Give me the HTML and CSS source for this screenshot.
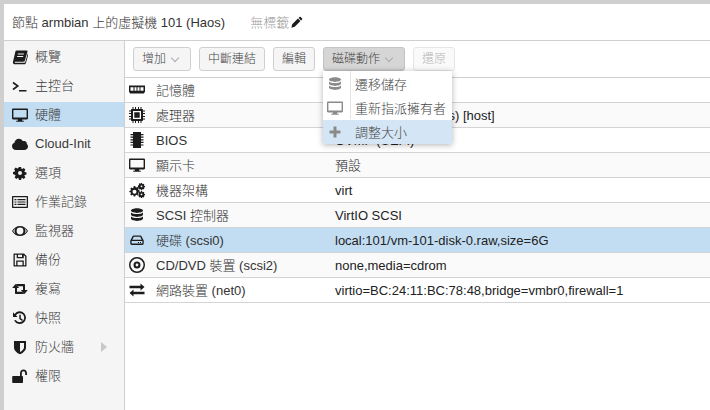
FILE: index.html
```html
<!DOCTYPE html>
<html lang="zh-Hant">
<head>
<meta charset="utf-8">
<title>節點 armbian 上的虛擬機 101 (Haos)</title>
<link rel="stylesheet" href="styles.css">
</head>
<body>
<svg class="defs" width="0" height="0" aria-hidden="true">
  <defs>
    <symbol id="i-book" viewBox="0 0 16 16"><path d="M4.500 1.500H15l.6.8-2.700 9.300c-.2.800-.8 1.200-1.600 1.200H3.200c-.6 0-.8.900-.1.900h9.200c.5 0 .8-.2 1-.7l2.500-8.500.7.500-2.600 9c-.2.800-.9 1.300-1.700 1.300H2.800C1.500 15.300.6 14 1 12.800L3.400 2.500c.1-.6.500-1 1.100-1zM6 4.500l-.3 1h6l.3-1H6zm-.7 2.400-.3 1h6l.3-1h-6z" fill-rule="evenodd"/></symbol>
    <symbol id="i-prompt" viewBox="0 0 16 16"><path d="M1 4.500 5.800 8 1 11.500M7 12.800h7.500" fill="none" stroke="#1c1c1c" stroke-width="1.600"/></symbol>
    <symbol id="i-monitor" viewBox="0 0 16 16"><path d="M1.200 1.500h13.600c.7 0 1.200.5 1.200 1.200v8.600c0 .7-.5 1.200-1.200 1.200H10.200v1.200h1.600v1.100H4.200v-1.100h1.600v-1.200H1.200C.5 12.500 0 12 0 11.300V2.700C0 2 .5 1.500 1.200 1.500zM1.400 2.900v7.500h13.200V2.900H1.400z" fill-rule="evenodd"/></symbol>
    <symbol id="i-cloud" viewBox="0 0 16 16"><path d="M4 14C1.800 14 0 12.400 0 10.300c0-1.700 1-3 2.500-3.500.1-2.300 2-4.100 4.400-4.100 1.800 0 3.300 1 4 2.500.4-.2.8-.3 1.300-.3 1.500 0 2.600 1.100 2.600 2.500 0 .3 0 .5-.1.700C15.800 8.700 16 9.900 16 10.500c0 2-1.700 3.500-3.700 3.500H4z"/></symbol>
    <symbol id="i-gear" viewBox="0 0 16 16"><path d="M6.900 2h2.200l.3 1.700.9.400 1.500-1 1.600 1.600-1 1.500.4.900 1.700.3v2.200l-1.700.3-.4.900 1 1.500-1.600 1.600-1.500-1-.9.400-.3 1.700H6.900l-.3-1.700-.9-.4-1.500 1-1.600-1.600 1-1.500-.4-.9L1 9.100V6.900l1.700-.3.400-.9-1-1.500 1.600-1.600 1.500 1 .9-.4L6.900 2zM8 6a2 2 0 1 0 0 4 2 2 0 0 0 0-4z" fill-rule="evenodd"/></symbol>
    <symbol id="i-list" viewBox="0 0 16 16"><path d="M1 2h14c.6 0 1 .4 1 1v10c0 .6-.4 1-1 1H1c-.6 0-1-.4-1-1V3c0-.6.4-1 1-1zm.3 1.300v9.400h13.400V3.300H1.300zM2.500 5h2v1.200h-2V5zm3 0h8v1.200h-8V5zm-3 2.400h2v1.200h-2V7.400zm3 0h8v1.200h-8V7.400zm-3 2.400h2V11h-2V9.800zm3 0h8V11h-8V9.800z" fill-rule="evenodd"/></symbol>
    <symbol id="i-eye" viewBox="0 0 16 16"><path d="M8 3c3.400 0 6.300 2 8 5-1.700 3-4.600 5-8 5s-6.300-2-8-5c1.700-3 4.600-5 8-5zM3.300 5.300C2.400 6 1.700 6.900 1.200 8c.6 1 1.300 1.900 2.200 2.600C2.800 9.700 2.500 8.900 2.500 8s.3-1.900.8-2.700zm9.400 0c.5.800.8 1.800.8 2.700s-.3 1.700-.9 2.600c.9-.7 1.600-1.600 2.200-2.600-.5-1.100-1.200-2-2.100-2.700zM8 4.600a3.400 3.400 0 0 0 0 6.800 3.400 3.400 0 0 0 0-6.800z" fill-rule="evenodd"/></symbol>
    <symbol id="i-save" viewBox="0 0 16 16"><path d="M2 1.500h10l2.500 2.500v10c0 .3-.2.500-.5.500H2c-.3 0-.5-.2-.5-.5V2c0-.3.2-.5.5-.5zm.8 1.300v10.400h1.400V8.500h7.600v4.700h1.400V4.600l-1.400-1.400v3H4.700V2.800H2.800zm3.200 0v2.100h4V2.800H6zM5.500 9.800v3.400h5V9.800h-5z" fill-rule="evenodd"/></symbol>
    <symbol id="i-retweet" viewBox="0 0 16 16"><path d="M3.500 3 7.200 7H5v3.800h5.300l1.800 2.200H3.800c-.5 0-.8-.3-.8-.8V7H.2L3.500 3zM12.500 13 8.800 9H11V5.200H5.700L3.900 3h8.300c.5 0 .8.300.8.800V9h2.800l-3.300 4z"/></symbol>
    <symbol id="i-history" viewBox="0 0 16 16"><path d="M2.600 3.900A6.300 6.300 0 1 1 2.100 10.600l1.700-.7A4.500 4.500 0 1 0 3.900 5.200L5.600 6.900H1V2.300l1.600 1.600zM7.300 4.800h1.500v3.500l2.100 1.400-.8 1.200-2.800-1.900V4.800z"/></symbol>
    <symbol id="i-shield" viewBox="0 0 16 16"><path d="M2 2h12v6.500c0 3.200-3.200 5.500-6 6.800-2.800-1.300-6-3.600-6-6.800V2zm6 2v8.900c1.900-1 4-2.600 4-4.500V4H8z" fill-rule="evenodd"/></symbol>
    <symbol id="i-unlock" viewBox="0 0 16 16"><path d="M1 8h7V5.200C8 3 9.500 1.500 11.500 1.500S15 3 15 5.200V7h-1.800V5.200c0-1.100-.7-1.900-1.700-1.900S9.800 4.100 9.800 5.200V8h.4c.5 0 .8.300.8.800v5.400c0 .5-.3.800-.8.800H1c-.5 0-.8-.3-.8-.8V8.800C.2 8.300.5 8 1 8z"/></symbol>
    <symbol id="i-memory" viewBox="0 0 16 16"><path d="M0 3.500h16v7h-1v1H1v-1H0v-7zM1.500 5.300v3.400h13V5.300h-13zM4.500 5.300h1v3.400h-1V5.300zm3 0h1v3.400h-1V5.300zm3 0h1v3.400h-1V5.300z" fill-rule="evenodd"/></symbol>
    <symbol id="i-cpu" viewBox="0 0 16 16"><path d="M3 2h10c.6 0 1 .4 1 1v10c0 .6-.4 1-1 1H3c-.6 0-1-.4-1-1V3c0-.6.4-1 1-1zm1 2v8h8V4H4zm1.300 1.300h5.400v5.400H5.300V5.300zM3.500 0h1v2h-1V0zM6 0h1v2H6V0zm3 0h1v2H9V0zm2.500 0h1v2h-1V0zM3.500 14h1v2h-1v-2zM6 14h1v2H6v-2zm3 0h1v2H9v-2zm2.500 0h1v2h-1v-2zM0 3.500h2v1H0v-1zM0 6h2v1H0V6zm0 3h2v1H0V9zm0 2.500h2v1H0v-1zM14 3.500h2v1h-2v-1zM14 6h2v1h-2V6zm0 3h2v1h-2V9zm0 2.500h2v1h-2v-1z" fill-rule="evenodd"/></symbol>
    <symbol id="i-chip" viewBox="0 0 16 16"><path d="M4 0h8v16H4V0zM1.500 2H4v1.200H1.500V2zm0 2.600H4v1.200H1.500V4.600zm0 2.600H4v1.200H1.500V7.200zm0 2.600H4V11H1.500V9.800zm0 2.600H4v1.200H1.500v-1.200zM12 2h2.500v1.200H12V2zm0 2.600h2.500v1.200H12V4.600zm0 2.600h2.500v1.200H12V7.200zm0 2.600h2.500V11H12V9.800zm0 2.600h2.500v1.200H12v-1.200z"/></symbol>
    <symbol id="i-cogs" viewBox="0 0 16 16"><path d="M4.800 4h1.400l.4 1.200.9.400 1.200-.6 1 1-.6 1.200.4.900 1.200.4v1.400l-1.200.4-.4.900.6 1.200-1 1-1.200-.6-.9.400-.4 1.200H4.800l-.4-1.200-.9-.4-1.200.6-1-1 .6-1.200-.4-.9-1.200-.4V9.100l1.200-.4.4-.9-.6-1.200 1-1 1.200.6.9-.4L4.800 4zm.7 3.800a2 2 0 1 0 0 4 2 2 0 0 0 0-4zM11.900 1h1.200l.2 1 .5.200.8-.5.8.8-.5.8.2.5 1 .2v1.200l-1 .2-.2.5.5.8-.8.8-.8-.5-.5.2-.2 1h-1.200l-.2-1-.5-.2-.8.5-.8-.8.5-.8-.2-.5-1-.2V3.500l1-.2.2-.5-.5-.8.8-.8.8.5.5-.2.2-1zm.6 2.400a.9.9 0 1 0 0 1.800.9.9 0 0 0 0-1.800zM11.900 9h1.200l.2 1 .5.200.8-.5.8.8-.5.8.2.5 1 .2v1.200l-1 .2-.2.5.5.8-.8.8-.8-.5-.5.2-.2 1h-1.200l-.2-1-.5-.2-.8.5-.8-.8.5-.8-.2-.5-1-.2v-1.200l1-.2.2-.5-.5-.8.8-.8.8.5.5-.2.2-1zm.6 2.400a.9.9 0 1 0 0 1.800.9.9 0 0 0 0-1.800z" fill-rule="evenodd"/></symbol>
    <symbol id="i-db" viewBox="0 0 16 16"><path d="M8 1.300c3.300 0 6 1 6 2.300S11.300 5.900 8 5.900 2 4.900 2 3.600 4.700 1.300 8 1.300zM2 5.400C3.100 6.500 5.400 7.100 8 7.100s4.900-.6 6-1.700v2.200c0 1.300-2.700 2.300-6 2.300S2 8.900 2 7.600V5.400zm0 4C3.100 10.500 5.400 11.100 8 11.100s4.900-.6 6-1.700v2.200c0 1.300-2.700 2.300-6 2.300s-6-1-6-2.300V9.400z"/></symbol>
    <symbol id="i-hdd" viewBox="0 0 16 16"><path d="M4.600 3.500h6.800c.5 0 .9.200 1.100.7l2.200 4.300v3.100c0 .8-.6 1.400-1.400 1.400H2.700c-.8 0-1.400-.6-1.400-1.400V8.500l2.200-4.300c.2-.5.600-.7 1.100-.7zm.2 1.300L3.300 7.800h9.400l-1.500-3H4.800zM2.600 9.100v2.400c0 .1.100.1.100.1h10.600c.1 0 .1 0 .1-.1V9.100H2.600zm8.400.8h1v1h-1v-1zm-2 0h1v1H9v-1z" fill-rule="evenodd"/></symbol>
    <symbol id="i-disc" viewBox="0 0 16 16"><path d="M8 0a8 8 0 1 1 0 16A8 8 0 0 1 8 0zm0 1.500a6.500 6.500 0 1 0 0 13 6.500 6.500 0 0 0 0-13zM8 4.500a3.500 3.500 0 1 1 0 7 3.500 3.500 0 0 1 0-7zM8 6.600a1.400 1.400 0 1 0 0 2.800 1.400 1.400 0 0 0 0-2.800z" fill-rule="evenodd"/></symbol>
    <symbol id="i-exchange" viewBox="0 0 16 16"><path d="M11.500 1.500 15.500 5l-4 3.500V6.200H.5V3.800h11V1.500zM4.500 7.500v2.300h11v2.400H4.500v2.300L.5 11l4-3.500z"/></symbol>
    <symbol id="i-pencil" viewBox="0 0 16 16"><path d="M11.400 1.200c.4-.4 1-.4 1.400 0l2 2c.4.400.4 1 0 1.400l-1.300 1.300-3.400-3.400 1.300-1.300zM9.200 3.400l3.400 3.400L5 14.400l-4.500 1.100 1.100-4.500 7.600-7.600z"/></symbol>
    <symbol id="i-plus" viewBox="0 0 16 16"><path d="M6.500 2.500h3V6.500h4v3h-4v4h-3v-4h-4v-3h4V2.500z"/></symbol>
  </defs>
</svg>

<div class="app">
  <header class="title-bar">
    <span class="title">節點 armbian 上的虛擬機 101 (Haos)</span>
    <span class="tags">無標籤</span>
    <svg class="ico pencil"><use href="#i-pencil"/></svg>
  </header>
  <div class="main">
    <nav class="side">
      <a class="nav-item"><svg class="ico"><use href="#i-book"/></svg><span>概覽</span></a>
      <a class="nav-item"><svg class="ico"><use href="#i-prompt"/></svg><span>主控台</span></a>
      <a class="nav-item active"><svg class="ico"><use href="#i-monitor"/></svg><span>硬體</span></a>
      <a class="nav-item"><svg class="ico"><use href="#i-cloud"/></svg><span>Cloud-Init</span></a>
      <a class="nav-item"><svg class="ico"><use href="#i-gear"/></svg><span>選項</span></a>
      <a class="nav-item"><svg class="ico"><use href="#i-list"/></svg><span>作業記錄</span></a>
      <a class="nav-item"><svg class="ico"><use href="#i-eye"/></svg><span>監視器</span></a>
      <a class="nav-item"><svg class="ico"><use href="#i-save"/></svg><span>備份</span></a>
      <a class="nav-item"><svg class="ico"><use href="#i-retweet"/></svg><span>複寫</span></a>
      <a class="nav-item"><svg class="ico"><use href="#i-history"/></svg><span>快照</span></a>
      <a class="nav-item"><svg class="ico"><use href="#i-shield"/></svg><span>防火牆</span><i class="expander"></i></a>
      <a class="nav-item"><svg class="ico"><use href="#i-unlock"/></svg><span>權限</span></a>
    </nav>
    <section class="content">
      <div class="toolbar">
        <button class="btn">增加<i class="caret"></i></button>
        <button class="btn">中斷連結</button>
        <button class="btn">編輯</button>
        <div class="btn-wrap">
          <button class="btn pressed">磁碟動作<i class="caret"></i></button>
          <div class="menu">
            <div class="menu-item"><svg class="ico"><use href="#i-db"/></svg><span>遷移儲存</span></div>
            <div class="menu-item"><svg class="ico"><use href="#i-monitor"/></svg><span>重新指派擁有者</span></div>
            <div class="menu-item hover"><svg class="ico"><use href="#i-plus"/></svg><span>調整大小</span></div>
          </div>
        </div>
        <button class="btn disabled">還原</button>
      </div>
      <div class="grid">
        <div class="row"><div class="key"><svg class="ico"><use href="#i-memory"/></svg>記憶體</div><div class="val">2.00 GiB</div></div>
        <div class="row alt"><div class="key"><svg class="ico"><use href="#i-cpu"/></svg>處理器</div><div class="val">2 (1 sockets, 2 cores) [host]</div></div>
        <div class="row"><div class="key"><svg class="ico"><use href="#i-chip"/></svg>BIOS</div><div class="val">OVMF (UEFI)</div></div>
        <div class="row alt"><div class="key"><svg class="ico"><use href="#i-monitor"/></svg>顯示卡</div><div class="val">預設</div></div>
        <div class="row"><div class="key"><svg class="ico"><use href="#i-cogs"/></svg>機器架構</div><div class="val">virt</div></div>
        <div class="row alt"><div class="key"><svg class="ico"><use href="#i-db"/></svg>SCSI 控制器</div><div class="val">VirtIO SCSI</div></div>
        <div class="row selected"><div class="key"><svg class="ico"><use href="#i-hdd"/></svg>硬碟 (scsi0)</div><div class="val">local:101/vm-101-disk-0.raw,size=6G</div></div>
        <div class="row alt"><div class="key"><svg class="ico"><use href="#i-disc"/></svg>CD/DVD 裝置 (scsi2)</div><div class="val">none,media=cdrom</div></div>
        <div class="row"><div class="key"><svg class="ico"><use href="#i-exchange"/></svg>網路裝置 (net0)</div><div class="val">virtio=BC:24:11:BC:78:48,bridge=vmbr0,firewall=1</div></div>
      </div>
    </section>
  </div>
</div>
</body>
</html>
```
FILE: styles.css
```css
* { box-sizing: border-box; }
html, body { margin: 0; height: 100%; }
body {
  background: #cfcfcf;
  font: 300 13px/15px "Liberation Sans", "Noto Sans CJK TC", sans-serif;
  color: #333;
  overflow: hidden;
}
.defs { position: absolute; }
.app {
  height: 410px;
  margin: 4px 0 0 4px;
  background: #fff;
  display: flex;
  flex-direction: column;
}
.ico { width: 16px; height: 16px; fill: #1c1c1c; flex: none; }
.title-bar {
  height: 37px;
  flex: none;
  display: flex;
  align-items: center;
  padding: 0 0 0 8px;
  border-bottom: 1px solid #cfcfcf;
}
.title { color: #333; }
.tags { margin-left: 25px; color: #999; }
.pencil { width: 12px; height: 12px; margin-left: 2px; }
.main { flex: 1; display: flex; min-height: 0; }
.side {
  width: 121px;
  flex: none;
  background: #f5f5f5;
  border-right: 1px solid #cfcfcf;
  padding-top: 3px;
  display: flex;
  flex-direction: column;
  gap: 4px;
}
.nav-item {
  height: 25px;
  display: flex;
  align-items: center;
  gap: 7px;
  padding-left: 8px;
  color: #3a3a3a;
  position: relative;
}
.nav-item.active { background: #c2ddf2; }
.expander {
  position: absolute;
  left: 97px;
  top: 8px;
  border-left: 6px solid #c8c8c8;
  border-top: 5px solid transparent;
  border-bottom: 5px solid transparent;
}
.content { flex: 1; min-width: 0; display: flex; flex-direction: column; }
.toolbar {
  height: 37px;
  flex: none;
  display: flex;
  align-items: center;
  gap: 8px;
  padding: 0 8px;
  border-bottom: 1px solid #cfcfcf;
  background: #fff;
}
.btn-wrap { position: relative; }
.btn {
  height: 24px;
  padding: 0 8px;
  border: 1px solid #cfcfcf;
  border-radius: 3px;
  background: #f5f5f5;
  color: #444;
  font: 300 12px/15px "Liberation Sans", "Noto Sans CJK TC", sans-serif;
  display: flex;
  align-items: center;
}
.btn.pressed { background: #d6d6d6; border-color: #c4c4c4; box-shadow: inset 0 -1px 1px rgba(0,0,0,.06); }
.btn.disabled { color: #b5b5b5; border-color: #e6e6e6; background: #fafafa; }
.caret {
  width: 6px;
  height: 6px;
  margin: -3px 4px 0 6px;
  border-right: 1px solid #aaa;
  border-bottom: 1px solid #aaa;
  transform: rotate(45deg);
}
.menu {
  position: absolute;
  left: 0;
  top: 24px;
  width: 129px;
  background: #fff;
  box-shadow: 0 1px 6px rgba(0,0,0,.3);
  z-index: 5;
  padding-top: 1px;
}
.menu::before {
  content: "";
  position: absolute;
  left: 27px;
  top: 0;
  height: 48px;
  width: 1px;
  background: #e4e4e4;
}
.menu-item {
  height: 24px;
  display: flex;
  align-items: center;
  gap: 12px;
  padding-left: 4px;
  color: #444;
}
.menu-item .ico { fill: #8a8a8a; }
.menu-item.hover { background: #d4e6f5; }
.grid { display: flex; flex-direction: column; }
.row {
  height: 25px;
  display: flex;
  align-items: center;
  border-bottom: 1px solid #d4d4d4;
  background: #fff;
}
.row.alt { background: #fafafa; }
.row.selected { background: #c2ddf2; }
.key {
  width: 206px;
  flex: none;
  display: flex;
  align-items: center;
  gap: 11px;
  padding-left: 4px;
  color: #333;
  white-space: pre;
}
.val { padding-left: 4px; color: #222; white-space: nowrap; }
```
